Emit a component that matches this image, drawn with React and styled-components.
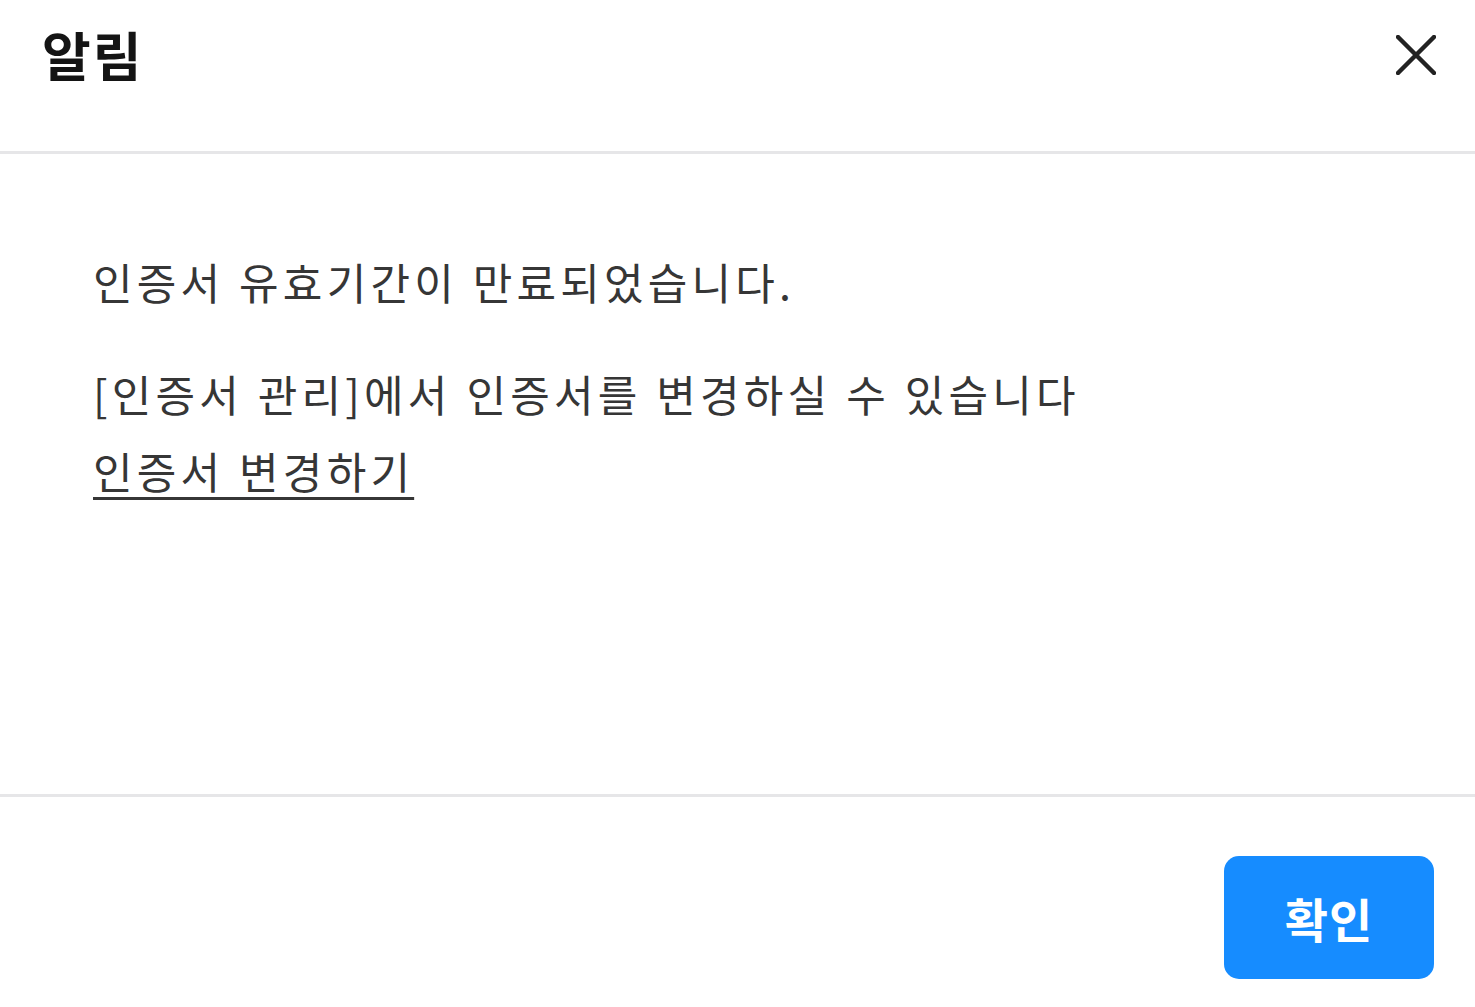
import React from "react";
import styled, { createGlobalStyle } from "styled-components";

const Global = createGlobalStyle`
  html, body { margin: 0; padding: 0; background: #ffffff; }
  body { font-family: "Noto Sans CJK KR", "Noto Sans", sans-serif; }
`;

const Dialog = styled.div`
  width: 1475px;
  height: 1007px;
  display: flex;
  flex-direction: column;
  background: #fff;
  overflow: hidden;
`;

const Header = styled.div`
  height: 154px;
  box-sizing: border-box;
  border-bottom: 3px solid #e6e6e8;
  display: flex;
  align-items: flex-start;
  justify-content: space-between;
  padding: 18px 38px 0 42px;
`;

const Title = styled.h1`
  margin: 0;
  font-size: 53px;
  line-height: 72px;
  font-weight: 700;
  color: #141414;
  letter-spacing: 2px;
`;

const CloseButton = styled.button`
  border: none;
  background: none;
  padding: 0;
  margin-top: 16px;
  width: 42px;
  height: 42px;
  display: flex;
  align-items: center;
  justify-content: center;
  cursor: pointer;
`;

const Body = styled.div`
  flex: 1;
  box-sizing: border-box;
  padding: 89px 40px 0 93px;
  border-bottom: 3px solid #e6e6e8;
`;

const Paragraph = styled.p`
  margin: 0 0 ${(p) => p.$gap || 0}px;
  font-size: 43px;
  line-height: 77px;
  letter-spacing: 4.2px;
  word-spacing: 1px;
  color: #363636;
  font-weight: 400;
`;

const Link = styled.a`
  color: #363636;
  text-decoration: underline;
  text-decoration-thickness: 3px;
  text-underline-offset: 8px;
  cursor: pointer;
`;

const Footer = styled.div`
  height: 210px;
  box-sizing: border-box;
  display: flex;
  justify-content: flex-end;
  align-items: flex-start;
  padding: 59px 41px 0 0;
`;

const PrimaryButton = styled.button`
  width: 210px;
  height: 123px;
  border: none;
  border-radius: 15px;
  background: #168cff;
  color: #fff;
  font-family: "Noto Sans CJK KR", "Noto Sans", sans-serif;
  font-size: 47px;
  font-weight: 700;
  letter-spacing: 1px;
  cursor: pointer;
`;

export default function App() {
  return (
    <>
      <Global />
      <Dialog>
        <Header>
          <Title>알림</Title>
          <CloseButton aria-label="닫기">
            <svg width="40" height="40" viewBox="0 0 40 40">
              <path d="M2 2 L38 38 M38 2 L2 38" stroke="#222" strokeWidth="4.5" strokeLinecap="round" />
            </svg>
          </CloseButton>
        </Header>
        <Body>
          <Paragraph $gap={35}>인증서 유효기간이 만료되었습니다.</Paragraph>
          <Paragraph>[인증서 관리]에서 인증서를 변경하실 수 있습니다</Paragraph>
          <Paragraph>
            <Link>인증서 변경하기</Link>
          </Paragraph>
        </Body>
        <Footer>
          <PrimaryButton>확인</PrimaryButton>
        </Footer>
      </Dialog>
    </>
  );
}
